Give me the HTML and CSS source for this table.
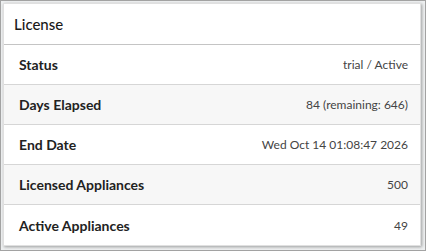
FILE: index.html
```html
<!DOCTYPE html>
<html>
	<head>
		<meta charset="utf-8">
		<title>License</title>
		<link rel="stylesheet" href="styles.css">
	</head>
	<body>
		<!-- 外框 -->
		<div class="frame">
			<!-- 许可证信息卡片 -->
			<div class="card">
				<div class="card-title">License</div>
				<div class="row">
					<span class="label">Status</span>
					<span class="value">trial / Active</span>
				</div>
				<div class="row odd">
					<span class="label">Days Elapsed</span>
					<span class="value">84 (remaining: 646)</span>
				</div>
				<div class="row">
					<span class="label">End Date</span>
					<span class="value">Wed Oct 14 01:08:47 2026</span>
				</div>
				<div class="row odd">
					<span class="label">Licensed Appliances</span>
					<span class="value">500</span>
				</div>
				<div class="row last">
					<span class="label">Active Appliances</span>
					<span class="value">49</span>
				</div>
			</div>
		</div>
	</body>
</html>
```

FILE: styles.css
```css
*{
	margin: 0px;padding: 0px;
	box-sizing: border-box;
}
body{
	font-family: Lato, "Open Sans", sans-serif;
	color: #333;
}
.frame{
	width: 426px;height: 251px;
	border: 1px solid #a3a3a3;
	background-color: #eef0f1;
	/* 卡片四周留出阴影空间 */
	padding: 2px 4px 5px 2px;
}
.card{
	background-color: #fff;
	border: 1px solid #e0e0e0;
	box-shadow: 1px 1px 3px rgba(0,0,0,0.35);
}
.card-title{
	height: 41px;
	line-height: 40px;
	padding-left: 10px;
	font-size: 15px;
	font-weight: 500;
	color: #1a1a1a;
	border-bottom: 1px solid #c4c4c4;
}
.row{
	display: flex;
	justify-content: space-between;
	align-items: center;
	height: 40px;
	padding: 0 12px 0 15px;
	border-bottom: 1px solid #d6d6d6;
}
.row.odd{
	background-color: #f7f7f7;
}
.row.last{
	border-bottom: none;
}
.label{
	font-weight: bold;
	font-size: 14px;
	color: #222;
}
.value{
	font-size: 12px;
	color: #444;
}
```
